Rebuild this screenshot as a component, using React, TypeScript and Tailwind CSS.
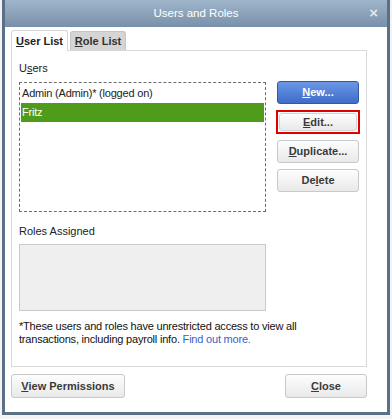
import React from "react";

const font = { fontFamily: '"Liberation Sans", Arial, sans-serif' };

function Btn({
  children,
  className = "",
}: {
  children: React.ReactNode;
  className?: string;
}) {
  return (
    <button
      className={
        "flex items-center justify-center rounded-[3px] border border-[#c8c8c8] bg-gradient-to-b from-[#fdfdfd] to-[#e9e9e9] text-[11px] font-bold text-[#3a3a3a] " +
        className
      }
    >
      {children}
    </button>
  );
}

export default function App() {
  return (
    <div className="relative h-[419px] w-[392px] overflow-hidden bg-[#f3f3f3]" style={font}>
      {/* window */}
      <div className="ml-[2px] flex h-[415px] w-[388px] flex-col border-x-[3px] border-b-[3px] border-[#5b7087]">
        {/* title bar */}
        <div className="relative flex h-[27px] shrink-0 items-center justify-center bg-gradient-to-b from-[#9fb5ca] to-[#7890a9] text-[11.5px] text-white">
          Users and Roles
          <span className="absolute right-[9px] top-[5px] text-[15px] font-bold leading-none text-[#dfe6ee]">×</span>
        </div>

        {/* body */}
        <div className="flex flex-1 flex-col bg-white pl-[6px] pr-[20px]">
          {/* tabs */}
          <div className="mt-[3px] flex h-[20px] items-end gap-[2px]">
            <div className="relative z-10 -mb-px flex h-[21px] w-[57px] items-center justify-center rounded-t-[3px] border border-b-0 border-[#d6d6d6] bg-white text-[11px] font-bold text-[#222]">
              <span><u>U</u>ser List</span>
            </div>
            <div className="flex h-[19px] w-[56px] items-center justify-center rounded-t-[3px] border border-b-0 border-[#c4c4c4] bg-[#d5d5d5] text-[11px] font-bold text-[#333]">
              <span><u>R</u>ole List</span>
            </div>
          </div>

          {/* panel */}
          <div className="flex h-[317px] flex-col border border-[#d9d9d9] pl-[7px] pr-[6px]">
            <div className="mt-[10px] text-[11px] leading-[14px] text-[#222]">
              U<u>s</u>ers
            </div>
            <div className="mt-[7px] flex gap-[11px]">
              <div className="h-[130px] w-[247px] border border-dashed border-[#6d6d6d] p-px text-[11px] tracking-[-0.2px] text-[#222]">
                <div className="flex h-[19px] items-center pl-[1px]">Admin (Admin)* (logged on)</div>
                <div className="flex h-[19px] items-center bg-[#4f9b1a] pl-[1px] text-white">Fritz</div>
              </div>
              <div className="-mt-px flex w-[82px] flex-col gap-[6px]">
                <button className="flex h-[23px] items-center justify-center rounded-[3px] border border-[#3257a8] bg-gradient-to-b from-[#6c98e6] to-[#3e6cc9] text-[11px] font-bold text-white">
                  <span><u>N</u>ew...</span>
                </button>
                <div className="-mx-[1px] border-[2px] border-[#e00000] p-[1px]">
                  <Btn className="h-[18px] w-full border-[#d4d4d4]">
                    <span><u>E</u>dit...</span>
                  </Btn>
                </div>
                <Btn className="h-[23px]">
                  <span><u>D</u>uplicate...</span>
                </Btn>
                <Btn className="h-[23px]">
                  <span>De<u>l</u>ete</span>
                </Btn>
              </div>
            </div>

            <div className="mt-[12px] text-[11px] leading-[14px] text-[#222]">Roles Assigned</div>
            <div className="mt-[6px] h-[67px] w-[247px] border border-[#c9c9c9] bg-[#efefef]" />

            <p className="mt-[9px] text-[11px] leading-[13px] tracking-[-0.2px] text-[#111]">
              *These users and roles have unrestricted access to view all
              <br />
              transactions, including payroll info. <span className="text-[#3a5fc8]">Find out more.</span>
            </p>
          </div>

          {/* footer buttons */}
          <div className="mt-[7px] flex justify-between">
            <Btn className="h-[24px] w-[114px]">
              <span><u>V</u>iew Permissions</span>
            </Btn>
            <Btn className="h-[24px] w-[82px]">
              <span><u>C</u>lose</span>
            </Btn>
          </div>
        </div>
      </div>
    </div>
  );
}
